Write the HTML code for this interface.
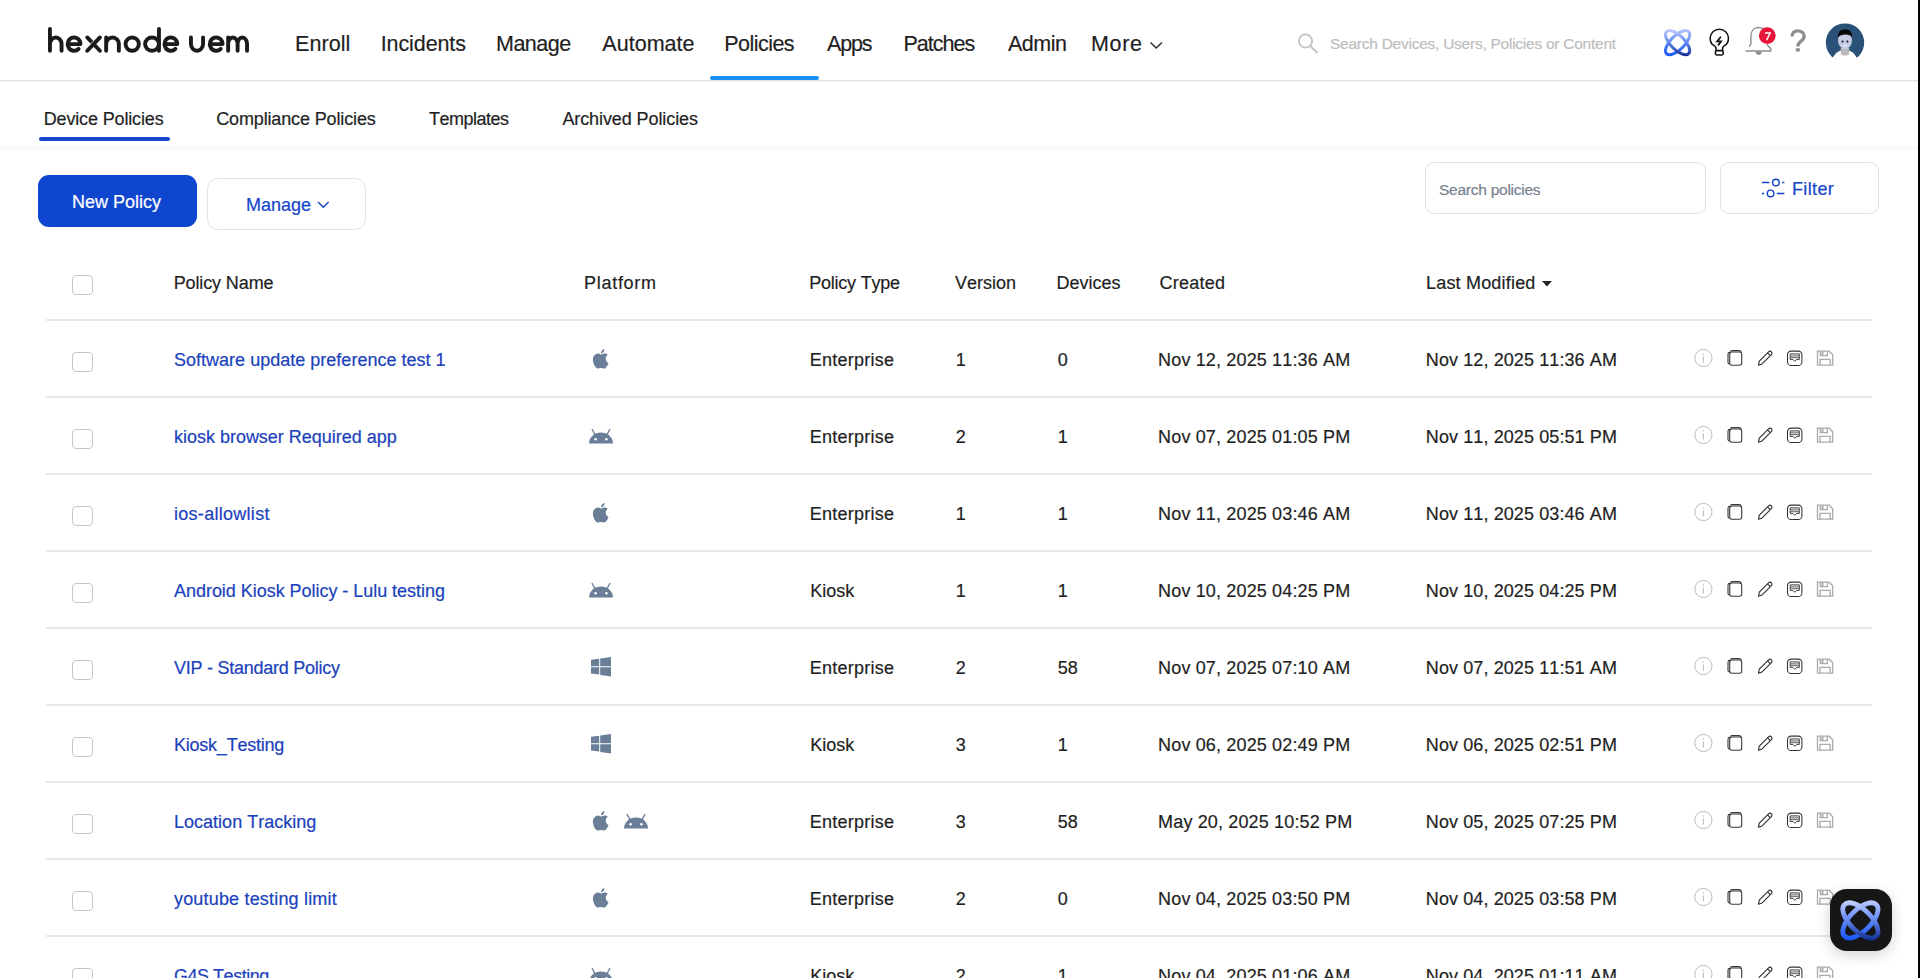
<!DOCTYPE html><html><head><meta charset="utf-8"><style>
html,body{margin:0;padding:0;width:1920px;height:978px;overflow:hidden;background:#fff;}
body{position:relative;font-family:"Liberation Sans",sans-serif;}
.t{position:absolute;white-space:nowrap;font-kerning:none;-webkit-text-stroke:0.2px currentColor;}
.a{position:absolute;}
</style></head><body>
<div class="a" style="left:0;top:80px;width:1918px;height:1px;background:#e4e4e4"></div>
<div class="a" style="left:0;top:81px;width:1918px;height:1px;background:#f3f3f3"></div>
<div class="a" style="left:1918px;top:0;width:2px;height:978px;background:#000"></div>
<svg class="a" style="left:0;top:0" width="260" height="70" viewBox="0 0 260 70"><g fill="none" stroke="#1b1b1b" stroke-width="3.9" stroke-linecap="round" stroke-linejoin="round"><path d="M49.95 28.85V50.75M49.95 44.1A5.8 6.65 0 0 1 61.55 44.1V50.75"/><path d="M67.75 44.1H80.45A6.35 6.65 0 1 0 78.6 48.8"/><path d="M87.25 37.45L99.95 50.75M99.95 37.45L87.25 50.75"/><path d="M106.15 37.45V50.75M106.15 44.1A6.35 6.65 0 0 1 118.85 44.1V50.75"/><ellipse cx="132.2" cy="44.1" rx="6.65" ry="6.65"/><ellipse cx="152" cy="44.1" rx="6.9" ry="6.65"/><path d="M158.95 28.85V50.75"/><path d="M164.55 44.1H177.25A6.35 6.65 0 1 0 175.4 48.8"/><path d="M190.95 37.45V44.1A6.05 6.65 0 0 0 203.05 44.1V37.45"/><path d="M209.85 44.1H222.55A6.35 6.65 0 1 0 220.7 48.8"/><path d="M228.15 37.45V50.75M228.15 44.1A4.72 6.65 0 0 1 237.6 44.1V50.75M237.6 44.1A4.72 6.65 0 0 1 247.05 44.1V50.75"/></g><path d="M93.3 41.2L90.7 43.8" stroke="#fff" stroke-width="0.8"/></svg>
<div class="t" style="left:295.0px;top:33.60px;font-size:21.5px;line-height:21.5px;color:#1f1f1f;letter-spacing:0.080px">Enroll</div>
<div class="t" style="left:380.7px;top:33.60px;font-size:21.5px;line-height:21.5px;color:#1f1f1f;letter-spacing:-0.092px">Incidents</div>
<div class="t" style="left:496.0px;top:33.60px;font-size:21.5px;line-height:21.5px;color:#1f1f1f;letter-spacing:-0.500px">Manage</div>
<div class="t" style="left:602.3px;top:33.60px;font-size:21.5px;line-height:21.5px;color:#1f1f1f;letter-spacing:0.026px">Automate</div>
<div class="t" style="left:724.25px;top:33.60px;font-size:21.5px;line-height:21.5px;color:#1f1f1f;letter-spacing:-0.534px">Policies</div>
<div class="t" style="left:827.0px;top:33.60px;font-size:21.5px;line-height:21.5px;color:#1f1f1f;letter-spacing:-1.167px">Apps</div>
<div class="t" style="left:903.5px;top:33.60px;font-size:21.5px;line-height:21.5px;color:#1f1f1f;letter-spacing:-1.000px">Patches</div>
<div class="t" style="left:1008.0px;top:33.60px;font-size:21.5px;line-height:21.5px;color:#1f1f1f;letter-spacing:-0.500px">Admin</div>
<div class="t" style="left:1091.0px;top:33.60px;font-size:21.5px;line-height:21.5px;color:#1f1f1f;letter-spacing:0.667px">More</div>
<svg class="a" style="left:1148px;top:40px" width="16" height="10" viewBox="0 0 16 10"><path d="M2.5 2.5L8.2 8L13.9 2.5" fill="none" stroke="#333" stroke-width="1.5"/></svg>
<div class="a" style="left:710px;top:76px;width:109px;height:4px;border-radius:2px;background:#1a8ff2"></div>
<svg class="a" style="left:1294px;top:30px" width="28" height="28" viewBox="0 0 28 28"><circle cx="11.5" cy="11" r="6.6" fill="none" stroke="#c2c2c2" stroke-width="1.8"/><path d="M16.3 16L23 22.5" stroke="#c2c2c2" stroke-width="1.8" stroke-linecap="round"/></svg>
<div class="t" style="left:1330px;top:36.28px;font-size:15.5px;line-height:15.5px;color:#bdbdbd;letter-spacing:-0.25px">Search Devices, Users, Policies or Content</div>
<svg class="a" style="left:1662.40px;top:27.20px;overflow:visible" width="31.20" height="31.20" viewBox="0 0 40 40"><defs><linearGradient id="hg1" gradientUnits="userSpaceOnUse" x1="0" y1="2" x2="0" y2="38"><stop offset="0" stop-color="#c9d3ff"/><stop offset="0.45" stop-color="#6c8ff5"/><stop offset="1" stop-color="#0e2c92"/></linearGradient><linearGradient id="hg2" gradientUnits="userSpaceOnUse" x1="0" y1="2" x2="0" y2="38"><stop offset="0" stop-color="#bfcbff"/><stop offset="0.5" stop-color="#5a84f7"/><stop offset="1" stop-color="#1656ff"/></linearGradient></defs><g fill="none" stroke-width="3.9"><path d="M34.14 5.86A20 8.8 -45 1 0 5.86 34.14A20 8.8 -45 1 0 34.14 5.86Z" stroke="url(#hg2)"/><path d="M5.86 5.86A20 8.8 45 1 0 34.14 34.14A20 8.8 45 1 0 5.86 5.86Z" stroke="url(#hg1)"/></g></svg>
<svg class="a" style="left:1706px;top:26px" width="28" height="32" viewBox="0 0 28 32"><path d="M10 24.6V22C10 20.6 8.2 19.6 6.25 18.4A9.2 9.2 0 1 1 20.35 18.4C18.4 19.6 16.6 20.6 16.6 22V24.6" fill="none" stroke="#111" stroke-width="1.55" stroke-linejoin="round"/><rect x="9.4" y="24.6" width="7.8" height="4.3" rx="1.3" fill="none" stroke="#111" stroke-width="1.55"/><path d="M14.9 10.8L11.2 15.3H15.1L12 19.5" fill="none" stroke="#111" stroke-width="1.8" stroke-linejoin="miter"/></svg>
<svg class="a" style="left:1742px;top:24px" width="36" height="36" viewBox="0 0 36 36"><path d="M21.6 4.9C20.2 4 18.5 3.5 16.6 3.5C11.9 3.5 8.9 6.9 8.9 12.2V19.6C8.9 20.7 8.4 21.5 7.4 22.1" fill="none" stroke="#8f8f8f" stroke-width="1.45" stroke-linecap="round"/><path d="M25 20.8L28.6 24.5C29.3 25.3 29.3 26.9 28 27" fill="none" stroke="#8f8f8f" stroke-width="1.45" stroke-linecap="round"/><path d="M4.3 27H28.2" stroke="#8f8f8f" stroke-width="1.7" stroke-linecap="round"/><path d="M13.6 27.3A3.1 3.6 0 0 0 19.8 27.3Z" fill="#8f8f8f"/><circle cx="25.3" cy="11.6" r="8.4" fill="#e8153a"/><path d="M23.0 8.9H28.2L24.6 16.3" fill="none" stroke="#fff" stroke-width="1.45"/></svg>
<svg class="a" style="left:1786px;top:26px" width="24" height="30" viewBox="0 0 24 30"><path d="M6 10.6C6 6.8 8.5 4.9 11.8 4.9C15.4 4.9 18.1 7 18.1 10.2C18.1 13.5 15.6 14.6 13.9 16.2C12.4 17.6 11.8 18.6 11.8 20.6" fill="none" stroke="#8e8e8e" stroke-width="3.4"/><rect x="9.8" y="22.2" width="4" height="3.3" fill="#8e8e8e"/></svg>
<svg class="a" style="left:1822px;top:20px" width="46" height="46" viewBox="0 0 46 46"><defs><clipPath id="avc"><circle cx="23" cy="22.6" r="19.2"/></clipPath></defs><circle cx="23" cy="22.6" r="19.2" fill="#2a5279"/><ellipse cx="22.8" cy="45.2" rx="13.6" ry="15.4" fill="#fff"/><path d="M18.8 28V33.5C18.8 35 20.5 35.6 23 35.6S27.2 35 27.2 33.5V28Z" fill="#b9b9b9"/><ellipse cx="23" cy="20.3" rx="7" ry="8.6" fill="#c6cce3"/><path d="M15.8 17.5C15.5 12.5 18.5 9.2 23.3 9.2C27.8 9.2 30.6 12.3 30 17.2C28.5 15 26.5 14.3 23.5 14.4C20 14.5 17.5 15.5 15.8 17.5Z" fill="#080808"/><circle cx="20.5" cy="21.5" r="1" fill="#111"/><circle cx="25.4" cy="21.5" r="1" fill="#111"/><path d="M20.6 25.3Q23 27.6 25.4 25.3Z" fill="#fff"/></svg>
<div class="t" style="left:43.7px;top:110.46px;font-size:18px;line-height:18px;color:#1f1f1f;letter-spacing:-0.149px">Device Policies</div>
<div class="t" style="left:216.2px;top:110.46px;font-size:18px;line-height:18px;color:#1f1f1f;letter-spacing:-0.139px">Compliance Policies</div>
<div class="t" style="left:429.0px;top:110.46px;font-size:18px;line-height:18px;color:#1f1f1f;letter-spacing:-0.500px">Templates</div>
<div class="t" style="left:562.4px;top:110.46px;font-size:18px;line-height:18px;color:#1f1f1f;letter-spacing:-0.089px">Archived Policies</div>
<div class="a" style="left:39px;top:137px;width:131px;height:4px;border-radius:2px;background:#1646c9"></div>
<div class="a" style="left:0;top:143px;width:1918px;height:7px;background:linear-gradient(#fefefe,#f8f8f8)"></div>
<div class="a" style="left:38px;top:175px;width:159px;height:52px;border-radius:11px;background:#0e46d0"></div>
<div class="t" style="left:72px;top:193.01px;font-size:18px;line-height:18px;color:#ffffff;">New Policy</div>
<div class="a" style="left:207px;top:178px;width:157px;height:50px;border-radius:11px;border:1px solid #e2e2e2;background:#fff"></div>
<div class="t" style="left:246px;top:195.96px;font-size:18px;line-height:18px;color:#1646c9;">Manage</div>
<svg class="a" style="left:315px;top:199px" width="16" height="11" viewBox="0 0 16 11"><path d="M3 3L8.3 8.3L13.6 3" fill="none" stroke="#1646c9" stroke-width="1.4"/></svg>
<div class="a" style="left:1425px;top:162px;width:279px;height:50px;border-radius:9px;border:1px solid #e2e2e2;background:#fff"></div>
<div class="t" style="left:1439px;top:182.08px;font-size:15.5px;line-height:15.5px;color:#77828e;letter-spacing:-0.25px">Search policies</div>
<div class="a" style="left:1720px;top:162px;width:157px;height:50px;border-radius:9px;border:1px solid #e2e2e2;background:#fff"></div>
<svg class="a" style="left:1758px;top:176px" width="30" height="22" viewBox="0 0 30 22"><g fill="none" stroke="#1646c9" stroke-width="1.45"><path d="M3.9 6.5H11.4M24.2 6.5H26.4M3.9 17.4H6.2M18.8 17.4H26.4"/><circle cx="17.9" cy="6.5" r="3.3"/><circle cx="12.6" cy="17.4" r="3.3"/></g></svg>
<div class="t" style="left:1792px;top:180.26px;font-size:18px;line-height:18px;color:#1646c9;letter-spacing:0.35px">Filter</div>
<div class="a" style="left:72px;top:275px;width:19px;height:18px;border:1px solid #c6c6c6;border-radius:4px;background:#fff"></div>
<div class="t" style="left:173.7px;top:273.56px;font-size:18px;line-height:18px;color:#1f1f1f;letter-spacing:-0.120px">Policy Name</div>
<div class="t" style="left:584.1px;top:273.56px;font-size:18px;line-height:18px;color:#1f1f1f;letter-spacing:0.698px">Platform</div>
<div class="t" style="left:809.2px;top:273.56px;font-size:18px;line-height:18px;color:#1f1f1f;letter-spacing:-0.220px">Policy Type</div>
<div class="t" style="left:955.0px;top:273.56px;font-size:18px;line-height:18px;color:#1f1f1f;letter-spacing:0.000px">Version</div>
<div class="t" style="left:1056.4px;top:273.56px;font-size:18px;line-height:18px;color:#1f1f1f;letter-spacing:0.000px">Devices</div>
<div class="t" style="left:1159.4px;top:273.56px;font-size:18px;line-height:18px;color:#1f1f1f;letter-spacing:0.268px">Created</div>
<div class="t" style="left:1426.0px;top:273.56px;font-size:18px;line-height:18px;color:#1f1f1f;letter-spacing:0.191px">Last Modified</div>
<svg class="a" style="left:1540px;top:278px" width="14" height="12" viewBox="0 0 14 12"><path d="M2 3H12L7 8.5Z" fill="#222"/></svg>
<div class="a" style="left:46px;top:319px;width:1826px;height:2px;background:#e9e9e9"></div>
<div class="a" style="left:72px;top:352px;width:19px;height:18px;border:1px solid #c6c6c6;border-radius:4px;background:#fff"></div>
<div class="t" style="left:174.0px;top:350.96px;font-size:18px;line-height:18px;color:#1b42bb;letter-spacing:0.013px">Software update preference test 1</div>
<svg class="a" style="left:592.2px;top:347.7px" width="17.6" height="22" viewBox="0 0 16 20" fill="#6b7e98"><path d="M8 6C6.5 5 4.8 4.8 3.4 5.6C1.2 6.8 0.3 9.6 1 12.6C1.6 15.2 3.3 18.6 5.2 18.7C6.2 18.7 6.8 18.1 8 18.1C9.2 18.1 9.7 18.7 10.8 18.7C12.7 18.7 14.2 15.8 15 13.6C13.3 12.8 12.4 11.2 12.5 9.5C12.6 8 13.4 6.9 14.4 6.2C13.5 5 12.1 4.9 11.2 5C10 5.1 9 5.9 8 6Z"/><path d="M8.2 4.8C8.1 3.2 9.3 1.2 11.3 0.8C11.5 2.8 10 4.6 8.2 4.8Z"/></svg>
<div class="t" style="left:809.8px;top:350.96px;font-size:18px;line-height:18px;color:#1f1f1f;letter-spacing:0.243px">Enterprise</div>
<div class="t" style="left:955.7px;top:350.96px;font-size:18px;line-height:18px;color:#1f1f1f;">1</div>
<div class="t" style="left:1057.8px;top:350.96px;font-size:18px;line-height:18px;color:#1f1f1f;">0</div>
<div class="t" style="left:1158.1px;top:350.96px;font-size:18px;line-height:18px;color:#1f1f1f;letter-spacing:0.148px">Nov 12, 2025 11:36 AM</div>
<div class="t" style="left:1425.8px;top:350.96px;font-size:18px;line-height:18px;color:#1f1f1f;letter-spacing:0.100px">Nov 12, 2025 11:36 AM</div>
<svg class="a" style="left:1690px;top:348px" width="150" height="20" viewBox="0 0 150 20"><circle cx="13.4" cy="10" r="8.6" fill="none" stroke="#bdbdbd" stroke-width="1"/><path d="M13.4 8.5V14.5" stroke="#bdbdbd" stroke-width="1.1"/><circle cx="13.4" cy="6" r="0.7" fill="#bdbdbd"/><g fill="none" stroke="#3a3a3a" stroke-width="1.1"><rect x="39.7" y="4" width="12" height="13.3" rx="2.2"/><path d="M39.7 5.5V4.3C38.5 4.3 38 5 38 6.2V14.5C38 15.5 38.6 16 39.7 16"/><path d="M40.5 3.6C40.8 2.8 41.5 2.6 42.2 2.6H49C50.2 2.6 51 3.3 51.4 4.3"/></g><g fill="none" stroke="#2e2e2e" stroke-width="1.1" stroke-linejoin="round"><path d="M68.5 17.2L69.3 13.1L78.6 3.8A1.9 1.9 0 0 1 81.4 6.6L72.1 15.9Z"/><path d="M77.5 4.9L80.3 7.7"/></g><g fill="none" stroke="#333" stroke-width="1.05"><rect x="97.5" y="3.1" width="14.4" height="14.4" rx="3.6"/><path d="M100.2 5.9H109.3V11.4H106.6L104.75 13.3L102.9 11.4H100.2Z" stroke-width="0.95"/><path d="M100.6 7.9H108.9M100.6 9.7H108.9" stroke-width="0.8"/></g><g fill="none" stroke="#aaaaaa" stroke-width="1.3"><path d="M127.5 3.2H139.2L142.7 6.7V17.2H127.5Z"/><path d="M130.3 3.2V7.6H137.3V3.2M130 17.2V11.3H140.2V17.2"/></g><rect x="131.5" y="3.5" width="2" height="3.5" fill="#aaa"/></svg>
<div class="a" style="left:46px;top:396px;width:1826px;height:2px;background:#e9e9e9"></div>
<div class="a" style="left:72px;top:429px;width:19px;height:18px;border:1px solid #c6c6c6;border-radius:4px;background:#fff"></div>
<div class="t" style="left:174.0px;top:427.96px;font-size:18px;line-height:18px;color:#1b42bb;letter-spacing:-0.016px">kiosk browser Required app</div>
<svg class="a" style="left:588px;top:427.8px" width="26" height="16" viewBox="0 0 26 16"><path d="M1 15.5A12 11 0 0 1 25 15.5Z" fill="#6b7e98"/><path d="M7 6.5L4.2 1.5M19 6.5L21.8 1.5" stroke="#6b7e98" stroke-width="1.4" stroke-linecap="round"/><circle cx="7.6" cy="11.3" r="1.3" fill="#fff"/><circle cx="18.4" cy="11.3" r="1.3" fill="#fff"/></svg>
<div class="t" style="left:809.8px;top:427.96px;font-size:18px;line-height:18px;color:#1f1f1f;letter-spacing:0.243px">Enterprise</div>
<div class="t" style="left:955.7px;top:427.96px;font-size:18px;line-height:18px;color:#1f1f1f;">2</div>
<div class="t" style="left:1057.8px;top:427.96px;font-size:18px;line-height:18px;color:#1f1f1f;">1</div>
<div class="t" style="left:1158.1px;top:427.96px;font-size:18px;line-height:18px;color:#1f1f1f;letter-spacing:0.148px">Nov 07, 2025 01:05 PM</div>
<div class="t" style="left:1425.8px;top:427.96px;font-size:18px;line-height:18px;color:#1f1f1f;letter-spacing:0.100px">Nov 11, 2025 05:51 PM</div>
<svg class="a" style="left:1690px;top:425px" width="150" height="20" viewBox="0 0 150 20"><circle cx="13.4" cy="10" r="8.6" fill="none" stroke="#bdbdbd" stroke-width="1"/><path d="M13.4 8.5V14.5" stroke="#bdbdbd" stroke-width="1.1"/><circle cx="13.4" cy="6" r="0.7" fill="#bdbdbd"/><g fill="none" stroke="#3a3a3a" stroke-width="1.1"><rect x="39.7" y="4" width="12" height="13.3" rx="2.2"/><path d="M39.7 5.5V4.3C38.5 4.3 38 5 38 6.2V14.5C38 15.5 38.6 16 39.7 16"/><path d="M40.5 3.6C40.8 2.8 41.5 2.6 42.2 2.6H49C50.2 2.6 51 3.3 51.4 4.3"/></g><g fill="none" stroke="#2e2e2e" stroke-width="1.1" stroke-linejoin="round"><path d="M68.5 17.2L69.3 13.1L78.6 3.8A1.9 1.9 0 0 1 81.4 6.6L72.1 15.9Z"/><path d="M77.5 4.9L80.3 7.7"/></g><g fill="none" stroke="#333" stroke-width="1.05"><rect x="97.5" y="3.1" width="14.4" height="14.4" rx="3.6"/><path d="M100.2 5.9H109.3V11.4H106.6L104.75 13.3L102.9 11.4H100.2Z" stroke-width="0.95"/><path d="M100.6 7.9H108.9M100.6 9.7H108.9" stroke-width="0.8"/></g><g fill="none" stroke="#aaaaaa" stroke-width="1.3"><path d="M127.5 3.2H139.2L142.7 6.7V17.2H127.5Z"/><path d="M130.3 3.2V7.6H137.3V3.2M130 17.2V11.3H140.2V17.2"/></g><rect x="131.5" y="3.5" width="2" height="3.5" fill="#aaa"/></svg>
<div class="a" style="left:46px;top:473px;width:1826px;height:2px;background:#e9e9e9"></div>
<div class="a" style="left:72px;top:506px;width:19px;height:18px;border:1px solid #c6c6c6;border-radius:4px;background:#fff"></div>
<div class="t" style="left:174.0px;top:504.96px;font-size:18px;line-height:18px;color:#1b42bb;letter-spacing:0.285px">ios-allowlist</div>
<svg class="a" style="left:592.2px;top:501.7px" width="17.6" height="22" viewBox="0 0 16 20" fill="#6b7e98"><path d="M8 6C6.5 5 4.8 4.8 3.4 5.6C1.2 6.8 0.3 9.6 1 12.6C1.6 15.2 3.3 18.6 5.2 18.7C6.2 18.7 6.8 18.1 8 18.1C9.2 18.1 9.7 18.7 10.8 18.7C12.7 18.7 14.2 15.8 15 13.6C13.3 12.8 12.4 11.2 12.5 9.5C12.6 8 13.4 6.9 14.4 6.2C13.5 5 12.1 4.9 11.2 5C10 5.1 9 5.9 8 6Z"/><path d="M8.2 4.8C8.1 3.2 9.3 1.2 11.3 0.8C11.5 2.8 10 4.6 8.2 4.8Z"/></svg>
<div class="t" style="left:809.8px;top:504.96px;font-size:18px;line-height:18px;color:#1f1f1f;letter-spacing:0.243px">Enterprise</div>
<div class="t" style="left:955.7px;top:504.96px;font-size:18px;line-height:18px;color:#1f1f1f;">1</div>
<div class="t" style="left:1057.8px;top:504.96px;font-size:18px;line-height:18px;color:#1f1f1f;">1</div>
<div class="t" style="left:1158.1px;top:504.96px;font-size:18px;line-height:18px;color:#1f1f1f;letter-spacing:0.148px">Nov 11, 2025 03:46 AM</div>
<div class="t" style="left:1425.8px;top:504.96px;font-size:18px;line-height:18px;color:#1f1f1f;letter-spacing:0.100px">Nov 11, 2025 03:46 AM</div>
<svg class="a" style="left:1690px;top:502px" width="150" height="20" viewBox="0 0 150 20"><circle cx="13.4" cy="10" r="8.6" fill="none" stroke="#bdbdbd" stroke-width="1"/><path d="M13.4 8.5V14.5" stroke="#bdbdbd" stroke-width="1.1"/><circle cx="13.4" cy="6" r="0.7" fill="#bdbdbd"/><g fill="none" stroke="#3a3a3a" stroke-width="1.1"><rect x="39.7" y="4" width="12" height="13.3" rx="2.2"/><path d="M39.7 5.5V4.3C38.5 4.3 38 5 38 6.2V14.5C38 15.5 38.6 16 39.7 16"/><path d="M40.5 3.6C40.8 2.8 41.5 2.6 42.2 2.6H49C50.2 2.6 51 3.3 51.4 4.3"/></g><g fill="none" stroke="#2e2e2e" stroke-width="1.1" stroke-linejoin="round"><path d="M68.5 17.2L69.3 13.1L78.6 3.8A1.9 1.9 0 0 1 81.4 6.6L72.1 15.9Z"/><path d="M77.5 4.9L80.3 7.7"/></g><g fill="none" stroke="#333" stroke-width="1.05"><rect x="97.5" y="3.1" width="14.4" height="14.4" rx="3.6"/><path d="M100.2 5.9H109.3V11.4H106.6L104.75 13.3L102.9 11.4H100.2Z" stroke-width="0.95"/><path d="M100.6 7.9H108.9M100.6 9.7H108.9" stroke-width="0.8"/></g><g fill="none" stroke="#aaaaaa" stroke-width="1.3"><path d="M127.5 3.2H139.2L142.7 6.7V17.2H127.5Z"/><path d="M130.3 3.2V7.6H137.3V3.2M130 17.2V11.3H140.2V17.2"/></g><rect x="131.5" y="3.5" width="2" height="3.5" fill="#aaa"/></svg>
<div class="a" style="left:46px;top:550px;width:1826px;height:2px;background:#e9e9e9"></div>
<div class="a" style="left:72px;top:583px;width:19px;height:18px;border:1px solid #c6c6c6;border-radius:4px;background:#fff"></div>
<div class="t" style="left:174.0px;top:581.96px;font-size:18px;line-height:18px;color:#1b42bb;letter-spacing:-0.035px">Android Kiosk Policy - Lulu testing</div>
<svg class="a" style="left:588px;top:581.8px" width="26" height="16" viewBox="0 0 26 16"><path d="M1 15.5A12 11 0 0 1 25 15.5Z" fill="#6b7e98"/><path d="M7 6.5L4.2 1.5M19 6.5L21.8 1.5" stroke="#6b7e98" stroke-width="1.4" stroke-linecap="round"/><circle cx="7.6" cy="11.3" r="1.3" fill="#fff"/><circle cx="18.4" cy="11.3" r="1.3" fill="#fff"/></svg>
<div class="t" style="left:810.2px;top:581.96px;font-size:18px;line-height:18px;color:#1f1f1f;letter-spacing:0.000px">Kiosk</div>
<div class="t" style="left:955.7px;top:581.96px;font-size:18px;line-height:18px;color:#1f1f1f;">1</div>
<div class="t" style="left:1057.8px;top:581.96px;font-size:18px;line-height:18px;color:#1f1f1f;">1</div>
<div class="t" style="left:1158.1px;top:581.96px;font-size:18px;line-height:18px;color:#1f1f1f;letter-spacing:0.148px">Nov 10, 2025 04:25 PM</div>
<div class="t" style="left:1425.8px;top:581.96px;font-size:18px;line-height:18px;color:#1f1f1f;letter-spacing:0.100px">Nov 10, 2025 04:25 PM</div>
<svg class="a" style="left:1690px;top:579px" width="150" height="20" viewBox="0 0 150 20"><circle cx="13.4" cy="10" r="8.6" fill="none" stroke="#bdbdbd" stroke-width="1"/><path d="M13.4 8.5V14.5" stroke="#bdbdbd" stroke-width="1.1"/><circle cx="13.4" cy="6" r="0.7" fill="#bdbdbd"/><g fill="none" stroke="#3a3a3a" stroke-width="1.1"><rect x="39.7" y="4" width="12" height="13.3" rx="2.2"/><path d="M39.7 5.5V4.3C38.5 4.3 38 5 38 6.2V14.5C38 15.5 38.6 16 39.7 16"/><path d="M40.5 3.6C40.8 2.8 41.5 2.6 42.2 2.6H49C50.2 2.6 51 3.3 51.4 4.3"/></g><g fill="none" stroke="#2e2e2e" stroke-width="1.1" stroke-linejoin="round"><path d="M68.5 17.2L69.3 13.1L78.6 3.8A1.9 1.9 0 0 1 81.4 6.6L72.1 15.9Z"/><path d="M77.5 4.9L80.3 7.7"/></g><g fill="none" stroke="#333" stroke-width="1.05"><rect x="97.5" y="3.1" width="14.4" height="14.4" rx="3.6"/><path d="M100.2 5.9H109.3V11.4H106.6L104.75 13.3L102.9 11.4H100.2Z" stroke-width="0.95"/><path d="M100.6 7.9H108.9M100.6 9.7H108.9" stroke-width="0.8"/></g><g fill="none" stroke="#aaaaaa" stroke-width="1.3"><path d="M127.5 3.2H139.2L142.7 6.7V17.2H127.5Z"/><path d="M130.3 3.2V7.6H137.3V3.2M130 17.2V11.3H140.2V17.2"/></g><rect x="131.5" y="3.5" width="2" height="3.5" fill="#aaa"/></svg>
<div class="a" style="left:46px;top:627px;width:1826px;height:2px;background:#e9e9e9"></div>
<div class="a" style="left:72px;top:660px;width:19px;height:18px;border:1px solid #c6c6c6;border-radius:4px;background:#fff"></div>
<div class="t" style="left:174.0px;top:658.96px;font-size:18px;line-height:18px;color:#1b42bb;letter-spacing:-0.260px">VIP - Standard Policy</div>
<svg class="a" style="left:591px;top:657px" width="20" height="20" viewBox="0 0 20 20" fill="#6b7e98"><path d="M0 2.8L8.2 1.7V9.2H0Z"/><path d="M9.2 1.55L20 0V9.2H9.2Z"/><path d="M0 10.2H8.2V17.6L0 16.5Z"/><path d="M9.2 10.2H20V19.5L9.2 18Z"/></svg>
<div class="t" style="left:809.8px;top:658.96px;font-size:18px;line-height:18px;color:#1f1f1f;letter-spacing:0.243px">Enterprise</div>
<div class="t" style="left:955.7px;top:658.96px;font-size:18px;line-height:18px;color:#1f1f1f;">2</div>
<div class="t" style="left:1057.8px;top:658.96px;font-size:18px;line-height:18px;color:#1f1f1f;">58</div>
<div class="t" style="left:1158.1px;top:658.96px;font-size:18px;line-height:18px;color:#1f1f1f;letter-spacing:0.148px">Nov 07, 2025 07:10 AM</div>
<div class="t" style="left:1425.8px;top:658.96px;font-size:18px;line-height:18px;color:#1f1f1f;letter-spacing:0.100px">Nov 07, 2025 11:51 AM</div>
<svg class="a" style="left:1690px;top:656px" width="150" height="20" viewBox="0 0 150 20"><circle cx="13.4" cy="10" r="8.6" fill="none" stroke="#bdbdbd" stroke-width="1"/><path d="M13.4 8.5V14.5" stroke="#bdbdbd" stroke-width="1.1"/><circle cx="13.4" cy="6" r="0.7" fill="#bdbdbd"/><g fill="none" stroke="#3a3a3a" stroke-width="1.1"><rect x="39.7" y="4" width="12" height="13.3" rx="2.2"/><path d="M39.7 5.5V4.3C38.5 4.3 38 5 38 6.2V14.5C38 15.5 38.6 16 39.7 16"/><path d="M40.5 3.6C40.8 2.8 41.5 2.6 42.2 2.6H49C50.2 2.6 51 3.3 51.4 4.3"/></g><g fill="none" stroke="#2e2e2e" stroke-width="1.1" stroke-linejoin="round"><path d="M68.5 17.2L69.3 13.1L78.6 3.8A1.9 1.9 0 0 1 81.4 6.6L72.1 15.9Z"/><path d="M77.5 4.9L80.3 7.7"/></g><g fill="none" stroke="#333" stroke-width="1.05"><rect x="97.5" y="3.1" width="14.4" height="14.4" rx="3.6"/><path d="M100.2 5.9H109.3V11.4H106.6L104.75 13.3L102.9 11.4H100.2Z" stroke-width="0.95"/><path d="M100.6 7.9H108.9M100.6 9.7H108.9" stroke-width="0.8"/></g><g fill="none" stroke="#aaaaaa" stroke-width="1.3"><path d="M127.5 3.2H139.2L142.7 6.7V17.2H127.5Z"/><path d="M130.3 3.2V7.6H137.3V3.2M130 17.2V11.3H140.2V17.2"/></g><rect x="131.5" y="3.5" width="2" height="3.5" fill="#aaa"/></svg>
<div class="a" style="left:46px;top:704px;width:1826px;height:2px;background:#e9e9e9"></div>
<div class="a" style="left:72px;top:737px;width:19px;height:18px;border:1px solid #c6c6c6;border-radius:4px;background:#fff"></div>
<div class="t" style="left:174.0px;top:735.96px;font-size:18px;line-height:18px;color:#1b42bb;letter-spacing:-0.233px">Kiosk_Testing</div>
<svg class="a" style="left:591px;top:734px" width="20" height="20" viewBox="0 0 20 20" fill="#6b7e98"><path d="M0 2.8L8.2 1.7V9.2H0Z"/><path d="M9.2 1.55L20 0V9.2H9.2Z"/><path d="M0 10.2H8.2V17.6L0 16.5Z"/><path d="M9.2 10.2H20V19.5L9.2 18Z"/></svg>
<div class="t" style="left:810.2px;top:735.96px;font-size:18px;line-height:18px;color:#1f1f1f;letter-spacing:0.000px">Kiosk</div>
<div class="t" style="left:955.7px;top:735.96px;font-size:18px;line-height:18px;color:#1f1f1f;">3</div>
<div class="t" style="left:1057.8px;top:735.96px;font-size:18px;line-height:18px;color:#1f1f1f;">1</div>
<div class="t" style="left:1158.1px;top:735.96px;font-size:18px;line-height:18px;color:#1f1f1f;letter-spacing:0.148px">Nov 06, 2025 02:49 PM</div>
<div class="t" style="left:1425.8px;top:735.96px;font-size:18px;line-height:18px;color:#1f1f1f;letter-spacing:0.100px">Nov 06, 2025 02:51 PM</div>
<svg class="a" style="left:1690px;top:733px" width="150" height="20" viewBox="0 0 150 20"><circle cx="13.4" cy="10" r="8.6" fill="none" stroke="#bdbdbd" stroke-width="1"/><path d="M13.4 8.5V14.5" stroke="#bdbdbd" stroke-width="1.1"/><circle cx="13.4" cy="6" r="0.7" fill="#bdbdbd"/><g fill="none" stroke="#3a3a3a" stroke-width="1.1"><rect x="39.7" y="4" width="12" height="13.3" rx="2.2"/><path d="M39.7 5.5V4.3C38.5 4.3 38 5 38 6.2V14.5C38 15.5 38.6 16 39.7 16"/><path d="M40.5 3.6C40.8 2.8 41.5 2.6 42.2 2.6H49C50.2 2.6 51 3.3 51.4 4.3"/></g><g fill="none" stroke="#2e2e2e" stroke-width="1.1" stroke-linejoin="round"><path d="M68.5 17.2L69.3 13.1L78.6 3.8A1.9 1.9 0 0 1 81.4 6.6L72.1 15.9Z"/><path d="M77.5 4.9L80.3 7.7"/></g><g fill="none" stroke="#333" stroke-width="1.05"><rect x="97.5" y="3.1" width="14.4" height="14.4" rx="3.6"/><path d="M100.2 5.9H109.3V11.4H106.6L104.75 13.3L102.9 11.4H100.2Z" stroke-width="0.95"/><path d="M100.6 7.9H108.9M100.6 9.7H108.9" stroke-width="0.8"/></g><g fill="none" stroke="#aaaaaa" stroke-width="1.3"><path d="M127.5 3.2H139.2L142.7 6.7V17.2H127.5Z"/><path d="M130.3 3.2V7.6H137.3V3.2M130 17.2V11.3H140.2V17.2"/></g><rect x="131.5" y="3.5" width="2" height="3.5" fill="#aaa"/></svg>
<div class="a" style="left:46px;top:781px;width:1826px;height:2px;background:#e9e9e9"></div>
<div class="a" style="left:72px;top:814px;width:19px;height:18px;border:1px solid #c6c6c6;border-radius:4px;background:#fff"></div>
<div class="t" style="left:174.0px;top:812.96px;font-size:18px;line-height:18px;color:#1b42bb;letter-spacing:0.012px">Location Tracking</div>
<svg class="a" style="left:592.2px;top:809.7px" width="17.6" height="22" viewBox="0 0 16 20" fill="#6b7e98"><path d="M8 6C6.5 5 4.8 4.8 3.4 5.6C1.2 6.8 0.3 9.6 1 12.6C1.6 15.2 3.3 18.6 5.2 18.7C6.2 18.7 6.8 18.1 8 18.1C9.2 18.1 9.7 18.7 10.8 18.7C12.7 18.7 14.2 15.8 15 13.6C13.3 12.8 12.4 11.2 12.5 9.5C12.6 8 13.4 6.9 14.4 6.2C13.5 5 12.1 4.9 11.2 5C10 5.1 9 5.9 8 6Z"/><path d="M8.2 4.8C8.1 3.2 9.3 1.2 11.3 0.8C11.5 2.8 10 4.6 8.2 4.8Z"/></svg>
<svg class="a" style="left:622.5px;top:812.8px" width="26" height="16" viewBox="0 0 26 16"><path d="M1 15.5A12 11 0 0 1 25 15.5Z" fill="#6b7e98"/><path d="M7 6.5L4.2 1.5M19 6.5L21.8 1.5" stroke="#6b7e98" stroke-width="1.4" stroke-linecap="round"/><circle cx="7.6" cy="11.3" r="1.3" fill="#fff"/><circle cx="18.4" cy="11.3" r="1.3" fill="#fff"/></svg>
<div class="t" style="left:809.8px;top:812.96px;font-size:18px;line-height:18px;color:#1f1f1f;letter-spacing:0.243px">Enterprise</div>
<div class="t" style="left:955.7px;top:812.96px;font-size:18px;line-height:18px;color:#1f1f1f;">3</div>
<div class="t" style="left:1057.8px;top:812.96px;font-size:18px;line-height:18px;color:#1f1f1f;">58</div>
<div class="t" style="left:1158.1px;top:812.96px;font-size:18px;line-height:18px;color:#1f1f1f;letter-spacing:0.148px">May 20, 2025 10:52 PM</div>
<div class="t" style="left:1425.8px;top:812.96px;font-size:18px;line-height:18px;color:#1f1f1f;letter-spacing:0.100px">Nov 05, 2025 07:25 PM</div>
<svg class="a" style="left:1690px;top:810px" width="150" height="20" viewBox="0 0 150 20"><circle cx="13.4" cy="10" r="8.6" fill="none" stroke="#bdbdbd" stroke-width="1"/><path d="M13.4 8.5V14.5" stroke="#bdbdbd" stroke-width="1.1"/><circle cx="13.4" cy="6" r="0.7" fill="#bdbdbd"/><g fill="none" stroke="#3a3a3a" stroke-width="1.1"><rect x="39.7" y="4" width="12" height="13.3" rx="2.2"/><path d="M39.7 5.5V4.3C38.5 4.3 38 5 38 6.2V14.5C38 15.5 38.6 16 39.7 16"/><path d="M40.5 3.6C40.8 2.8 41.5 2.6 42.2 2.6H49C50.2 2.6 51 3.3 51.4 4.3"/></g><g fill="none" stroke="#2e2e2e" stroke-width="1.1" stroke-linejoin="round"><path d="M68.5 17.2L69.3 13.1L78.6 3.8A1.9 1.9 0 0 1 81.4 6.6L72.1 15.9Z"/><path d="M77.5 4.9L80.3 7.7"/></g><g fill="none" stroke="#333" stroke-width="1.05"><rect x="97.5" y="3.1" width="14.4" height="14.4" rx="3.6"/><path d="M100.2 5.9H109.3V11.4H106.6L104.75 13.3L102.9 11.4H100.2Z" stroke-width="0.95"/><path d="M100.6 7.9H108.9M100.6 9.7H108.9" stroke-width="0.8"/></g><g fill="none" stroke="#aaaaaa" stroke-width="1.3"><path d="M127.5 3.2H139.2L142.7 6.7V17.2H127.5Z"/><path d="M130.3 3.2V7.6H137.3V3.2M130 17.2V11.3H140.2V17.2"/></g><rect x="131.5" y="3.5" width="2" height="3.5" fill="#aaa"/></svg>
<div class="a" style="left:46px;top:858px;width:1826px;height:2px;background:#e9e9e9"></div>
<div class="a" style="left:72px;top:891px;width:19px;height:18px;border:1px solid #c6c6c6;border-radius:4px;background:#fff"></div>
<div class="t" style="left:174.0px;top:889.96px;font-size:18px;line-height:18px;color:#1b42bb;letter-spacing:0.180px">youtube testing limit</div>
<svg class="a" style="left:592.2px;top:886.7px" width="17.6" height="22" viewBox="0 0 16 20" fill="#6b7e98"><path d="M8 6C6.5 5 4.8 4.8 3.4 5.6C1.2 6.8 0.3 9.6 1 12.6C1.6 15.2 3.3 18.6 5.2 18.7C6.2 18.7 6.8 18.1 8 18.1C9.2 18.1 9.7 18.7 10.8 18.7C12.7 18.7 14.2 15.8 15 13.6C13.3 12.8 12.4 11.2 12.5 9.5C12.6 8 13.4 6.9 14.4 6.2C13.5 5 12.1 4.9 11.2 5C10 5.1 9 5.9 8 6Z"/><path d="M8.2 4.8C8.1 3.2 9.3 1.2 11.3 0.8C11.5 2.8 10 4.6 8.2 4.8Z"/></svg>
<div class="t" style="left:809.8px;top:889.96px;font-size:18px;line-height:18px;color:#1f1f1f;letter-spacing:0.243px">Enterprise</div>
<div class="t" style="left:955.7px;top:889.96px;font-size:18px;line-height:18px;color:#1f1f1f;">2</div>
<div class="t" style="left:1057.8px;top:889.96px;font-size:18px;line-height:18px;color:#1f1f1f;">0</div>
<div class="t" style="left:1158.1px;top:889.96px;font-size:18px;line-height:18px;color:#1f1f1f;letter-spacing:0.148px">Nov 04, 2025 03:50 PM</div>
<div class="t" style="left:1425.8px;top:889.96px;font-size:18px;line-height:18px;color:#1f1f1f;letter-spacing:0.100px">Nov 04, 2025 03:58 PM</div>
<svg class="a" style="left:1690px;top:887px" width="150" height="20" viewBox="0 0 150 20"><circle cx="13.4" cy="10" r="8.6" fill="none" stroke="#bdbdbd" stroke-width="1"/><path d="M13.4 8.5V14.5" stroke="#bdbdbd" stroke-width="1.1"/><circle cx="13.4" cy="6" r="0.7" fill="#bdbdbd"/><g fill="none" stroke="#3a3a3a" stroke-width="1.1"><rect x="39.7" y="4" width="12" height="13.3" rx="2.2"/><path d="M39.7 5.5V4.3C38.5 4.3 38 5 38 6.2V14.5C38 15.5 38.6 16 39.7 16"/><path d="M40.5 3.6C40.8 2.8 41.5 2.6 42.2 2.6H49C50.2 2.6 51 3.3 51.4 4.3"/></g><g fill="none" stroke="#2e2e2e" stroke-width="1.1" stroke-linejoin="round"><path d="M68.5 17.2L69.3 13.1L78.6 3.8A1.9 1.9 0 0 1 81.4 6.6L72.1 15.9Z"/><path d="M77.5 4.9L80.3 7.7"/></g><g fill="none" stroke="#333" stroke-width="1.05"><rect x="97.5" y="3.1" width="14.4" height="14.4" rx="3.6"/><path d="M100.2 5.9H109.3V11.4H106.6L104.75 13.3L102.9 11.4H100.2Z" stroke-width="0.95"/><path d="M100.6 7.9H108.9M100.6 9.7H108.9" stroke-width="0.8"/></g><g fill="none" stroke="#aaaaaa" stroke-width="1.3"><path d="M127.5 3.2H139.2L142.7 6.7V17.2H127.5Z"/><path d="M130.3 3.2V7.6H137.3V3.2M130 17.2V11.3H140.2V17.2"/></g><rect x="131.5" y="3.5" width="2" height="3.5" fill="#aaa"/></svg>
<div class="a" style="left:46px;top:935px;width:1826px;height:2px;background:#e9e9e9"></div>
<div class="a" style="left:72px;top:968px;width:19px;height:18px;border:1px solid #c6c6c6;border-radius:4px;background:#fff"></div>
<div class="t" style="left:174.0px;top:966.96px;font-size:18px;line-height:18px;color:#1b42bb;letter-spacing:-0.480px">G4S Testing</div>
<svg class="a" style="left:588px;top:966.8px" width="26" height="16" viewBox="0 0 26 16"><path d="M1 15.5A12 11 0 0 1 25 15.5Z" fill="#6b7e98"/><path d="M7 6.5L4.2 1.5M19 6.5L21.8 1.5" stroke="#6b7e98" stroke-width="1.4" stroke-linecap="round"/><circle cx="7.6" cy="11.3" r="1.3" fill="#fff"/><circle cx="18.4" cy="11.3" r="1.3" fill="#fff"/></svg>
<div class="t" style="left:810.2px;top:966.96px;font-size:18px;line-height:18px;color:#1f1f1f;letter-spacing:0.000px">Kiosk</div>
<div class="t" style="left:955.7px;top:966.96px;font-size:18px;line-height:18px;color:#1f1f1f;">2</div>
<div class="t" style="left:1057.8px;top:966.96px;font-size:18px;line-height:18px;color:#1f1f1f;">1</div>
<div class="t" style="left:1158.1px;top:966.96px;font-size:18px;line-height:18px;color:#1f1f1f;letter-spacing:0.148px">Nov 04, 2025 01:06 AM</div>
<div class="t" style="left:1425.8px;top:966.96px;font-size:18px;line-height:18px;color:#1f1f1f;letter-spacing:0.100px">Nov 04, 2025 01:11 AM</div>
<svg class="a" style="left:1690px;top:964px" width="150" height="20" viewBox="0 0 150 20"><circle cx="13.4" cy="10" r="8.6" fill="none" stroke="#bdbdbd" stroke-width="1"/><path d="M13.4 8.5V14.5" stroke="#bdbdbd" stroke-width="1.1"/><circle cx="13.4" cy="6" r="0.7" fill="#bdbdbd"/><g fill="none" stroke="#3a3a3a" stroke-width="1.1"><rect x="39.7" y="4" width="12" height="13.3" rx="2.2"/><path d="M39.7 5.5V4.3C38.5 4.3 38 5 38 6.2V14.5C38 15.5 38.6 16 39.7 16"/><path d="M40.5 3.6C40.8 2.8 41.5 2.6 42.2 2.6H49C50.2 2.6 51 3.3 51.4 4.3"/></g><g fill="none" stroke="#2e2e2e" stroke-width="1.1" stroke-linejoin="round"><path d="M68.5 17.2L69.3 13.1L78.6 3.8A1.9 1.9 0 0 1 81.4 6.6L72.1 15.9Z"/><path d="M77.5 4.9L80.3 7.7"/></g><g fill="none" stroke="#333" stroke-width="1.05"><rect x="97.5" y="3.1" width="14.4" height="14.4" rx="3.6"/><path d="M100.2 5.9H109.3V11.4H106.6L104.75 13.3L102.9 11.4H100.2Z" stroke-width="0.95"/><path d="M100.6 7.9H108.9M100.6 9.7H108.9" stroke-width="0.8"/></g><g fill="none" stroke="#aaaaaa" stroke-width="1.3"><path d="M127.5 3.2H139.2L142.7 6.7V17.2H127.5Z"/><path d="M130.3 3.2V7.6H137.3V3.2M130 17.2V11.3H140.2V17.2"/></g><rect x="131.5" y="3.5" width="2" height="3.5" fill="#aaa"/></svg>
<div class="a" style="left:1830px;top:889px;width:62px;height:62px;border-radius:17px;background:#161616;box-shadow:0 4px 14px rgba(0,0,0,0.18)"></div>
<svg class="a" style="left:1838.20px;top:897.90px;overflow:visible" width="44.80" height="44.80" viewBox="0 0 40 40"><defs><linearGradient id="cg1" gradientUnits="userSpaceOnUse" x1="0" y1="2" x2="0" y2="38"><stop offset="0" stop-color="#c9d3ff"/><stop offset="0.45" stop-color="#6c8ff5"/><stop offset="1" stop-color="#0e2c92"/></linearGradient><linearGradient id="cg2" gradientUnits="userSpaceOnUse" x1="0" y1="2" x2="0" y2="38"><stop offset="0" stop-color="#bfcbff"/><stop offset="0.5" stop-color="#5a84f7"/><stop offset="1" stop-color="#1656ff"/></linearGradient></defs><g fill="none" stroke-width="4.3"><path d="M34.14 5.86A20 9.3 -45 1 0 5.86 34.14A20 9.3 -45 1 0 34.14 5.86Z" stroke="url(#cg2)"/><path d="M5.86 5.86A20 9.3 45 1 0 34.14 34.14A20 9.3 45 1 0 5.86 5.86Z" stroke="url(#cg1)"/></g></svg>
</body></html>
